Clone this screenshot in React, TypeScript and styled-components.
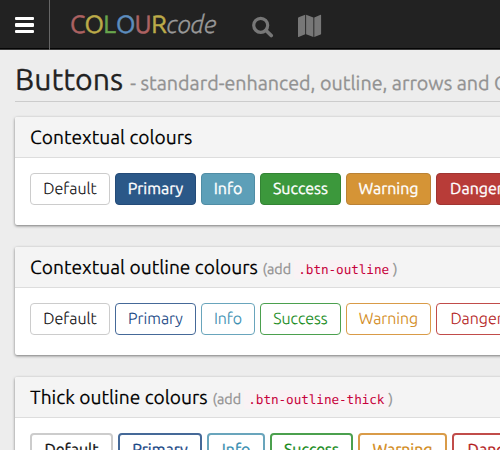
import React from "react";
import styled, { createGlobalStyle } from "styled-components";

const Global = createGlobalStyle`
  * { box-sizing: border-box; }
  html, body { margin: 0; padding: 0; overflow: hidden; background: #ededed; }
  body {
    font-family: Ubuntu, "Noto Sans", sans-serif;
    color: #000;
    text-rendering: geometricPrecision;
  }
`;

const Page = styled.div`
  width: 500px;
  height: 450px;
  overflow: hidden;
  background: #ededed;
`;
const Navbar = styled.header`
  display: flex;
  height: 50px;
  background: #222;
  border-bottom: 1px solid #3c3c3c;
  box-shadow: inset 0 -1px 0 #050505;
`;
const MenuToggle = styled.button`
  display: flex;
  flex-direction: column;
  gap: 3px;
  width: 50px;
  height: 50px;
  padding: 17px 0 0 15px;
  border: 0;
  border-right: 1px solid #666;
  background: none;
`;
const Bar = styled.span`
  width: 19px;
  height: 3.4px;
  border-radius: 1px;
  background: #fff;
`;
const Brand = styled.div`
  display: flex;
  width: 202px;
  padding-left: 20px;
  font-size: 25px;
  line-height: 49px;
  white-space: nowrap;
`;
const Letter = styled.span<{ $tint: string; $w: number }>`
  width: ${(p) => p.$w}px;
  color: ${(p) => p.$tint};
  -webkit-text-stroke: 0.5px currentColor;
`;
const BrandTail = styled.span`
  color: #999;
  font-style: italic;
  font-weight: 300;
  letter-spacing: -0.25px;
  -webkit-text-stroke: 0.3px currentColor;
`;
const NavIcon = styled.svg<{ $gap?: number }>`
  display: block;
  flex: none;
  margin-top: 14px;
  margin-left: ${(p) => p.$gap || 0}px;
`;
const Content = styled.main`
  padding: 0 0 0 15px;
`;
const PageHeader = styled.div`
  display: flex;
  align-items: baseline;
  height: 52px;
  margin-bottom: 15px;
  padding-top: 8px;
  border-bottom: 1px solid #ccc;
  white-space: nowrap;
  line-height: 42px;
`;
const Title = styled.h1`
  flex: none;
  width: 115.3px;
  margin: 0;
  font-size: 30.2px;
  font-weight: 400;
  color: #222;
  -webkit-text-stroke: 0.3px currentColor;
`;
const Subtitle = styled.span`
  font-size: 19.7px;
  color: #929292;
  -webkit-text-stroke: 0.3px currentColor;
`;
const Panel = styled.section`
  width: 530px;
  height: 108px;
  margin-bottom: 22px;
  border-radius: 2px;
  background: #fff;
  box-shadow: 0 1px 3px rgba(0, 0, 0, 0.5);
`;
const PanelHeading = styled.div`
  display: flex;
  align-items: baseline;
  height: 41px;
  padding-left: 15px;
  border-bottom: 1px solid #ddd;
  border-radius: 2px 2px 0 0;
  background: #f4f4f4;
  line-height: 40px;
  white-space: nowrap;
`;
const Heading = styled.h2<{ $w: number }>`
  width: ${(p) => p.$w}px;
  margin: 0;
  font-size: 19.2px;
  font-weight: 400;
  -webkit-text-stroke: 0.15px currentColor;
`;
const Hint = styled.small`
  font-size: 14.3px;
  line-height: 18px;
  color: #929292;
  -webkit-text-stroke: 0.25px currentColor;
`;
const Code = styled.code`
  padding: 2px 4px;
  border-radius: 3px;
  background: #f9f2f4;
  color: #c7003b;
  font: 12.7px/16px "DejaVu Sans Mono", monospace;
  letter-spacing: -0.08px;
  -webkit-text-stroke: 0;
`;
const Buttons = styled.div`
  display: flex;
  gap: 5px;
  padding: 15px 0 0 15px;
`;
const Button = styled.button<{
  $w: number;
  $fg: string;
  $bg?: string;
  $edge: string;
  $thick?: boolean;
  $weight: number;
}>`
  flex: none;
  width: ${(p) => p.$w}px;
  height: ${(p) => (p.$thick ? 34 : 32)}px;
  padding: 0;
  border: ${(p) => (p.$thick ? 2 : 1)}px solid ${(p) => p.$edge};
  border-radius: 4px;
  background: ${(p) => p.$bg || "#fff"};
  color: ${(p) => p.$fg};
  font: ${(p) => p.$weight} 16px/28px Ubuntu, "Noto Sans", sans-serif;
  text-rendering: geometricPrecision;
  -webkit-text-stroke: ${(p) => (p.$weight > 300 ? 0.3 : 0.1)}px currentColor;
`;

const kinds = [
  { name: "Default", w: 80, thickW: 83, bg: "#fff", edge: "#ccc", solidEdge: "#ccc", fg: "#111" },
  { name: "Primary", w: 81, thickW: 84, bg: "#2b5888", edge: "#456998", solidEdge: "#244b78", fg: "#174684" },
  { name: "Info", w: 54, thickW: 58, bg: "#5d9fb8", edge: "#69a5bc", solidEdge: "#508da5", fg: "#388eb1" },
  { name: "Success", w: 81, thickW: 83, bg: "#3c983c", edge: "#4ba04e", solidEdge: "#338434", fg: "#158a18" },
  { name: "Warning", w: 85, thickW: 89, bg: "#d59436", edge: "#d99b48", solidEdge: "#ba8236", fg: "#d28916" },
  { name: "Danger", w: 81, thickW: 84, bg: "#b83c38", edge: "#c14c4a", solidEdge: "#a03532", fg: "#b41c1c" },
];

type Variant = "solid" | "outline" | "thick";

function ButtonRow({ variant }: { variant: Variant }) {
  const solid = variant === "solid";
  const thick = variant === "thick";
  return (
    <Buttons>
      {kinds.map((k, i) => (
        <Button
          key={k.name}
          $w={thick ? k.thickW : k.w}
          $fg={solid && i > 0 ? "#fff" : k.fg}
          $bg={solid ? k.bg : undefined}
          $edge={solid ? k.solidEdge : k.edge}
          $thick={thick}
          $weight={thick || (solid && i > 0) ? 400 : 300}
        >
          {k.name}
        </Button>
      ))}
    </Buttons>
  );
}

const letters: [string, string, number][] = [
  ["C", "#ad6262", 14.5],
  ["O", "#bcab49", 18.7],
  ["L", "#68a54d", 12.8],
  ["O", "#5d8dbe", 18.5],
  ["U", "#ad6262", 16.7],
  ["R", "#bcab49", 15.3],
];

export default function App() {
  return (
    <Page>
      <Global />
      <Navbar>
        <MenuToggle aria-label="Menu">
          <Bar />
          <Bar />
          <Bar />
        </MenuToggle>
        <Brand>
          {letters.map(([c, tint, w], i) => (
            <Letter key={i} $tint={tint} $w={w}>
              {c}
            </Letter>
          ))}
          <BrandTail>code</BrandTail>
        </Brand>
        <NavIcon width="22" height="24" viewBox="0 0 22 24" fill="none" stroke="#777">
          <circle cx="8.7" cy="11.3" r="7" strokeWidth="3.2" />
          <path d="M14 16.5l5.2 5" strokeWidth="3.7" strokeLinecap="round" />
        </NavIcon>
        <NavIcon $gap={24} width="24" height="24" viewBox="0 0 24 24" fill="#777">
          <path d="M0 4.3Q0 3.6.6 3.3L7.2.7V20.2L.6 23Q0 23.1 0 22.5ZM8.1.7L15.4 3.6V23.1L8.1 20.2ZM16.3 3.6L22.6.8Q23.1.7 23.1 1.3V19.7Q23.1 20.2 22.6 20.5L16.3 23.1Z" />
        </NavIcon>
      </Navbar>
      <Content>
        <PageHeader>
          <Title>Buttons</Title>
          <Subtitle>- standard-enhanced, outline, arrows and Groups</Subtitle>
        </PageHeader>
        <Panel>
          <PanelHeading>
            <Heading $w={165}>Contextual colours</Heading>
          </PanelHeading>
          <ButtonRow variant="solid" />
        </Panel>
        <Panel>
          <PanelHeading>
            <Heading $w={232.5}>Contextual outline colours</Heading>
            <Hint>
              (add <Code>.btn-outline</Code>)
            </Hint>
          </PanelHeading>
          <ButtonRow variant="outline" />
        </Panel>
        <Panel>
          <PanelHeading>
            <Heading $w={182.5}>Thick outline colours</Heading>
            <Hint>
              (add <Code>.btn-outline-thick</Code>)
            </Hint>
          </PanelHeading>
          <ButtonRow variant="thick" />
        </Panel>
      </Content>
    </Page>
  );
}
